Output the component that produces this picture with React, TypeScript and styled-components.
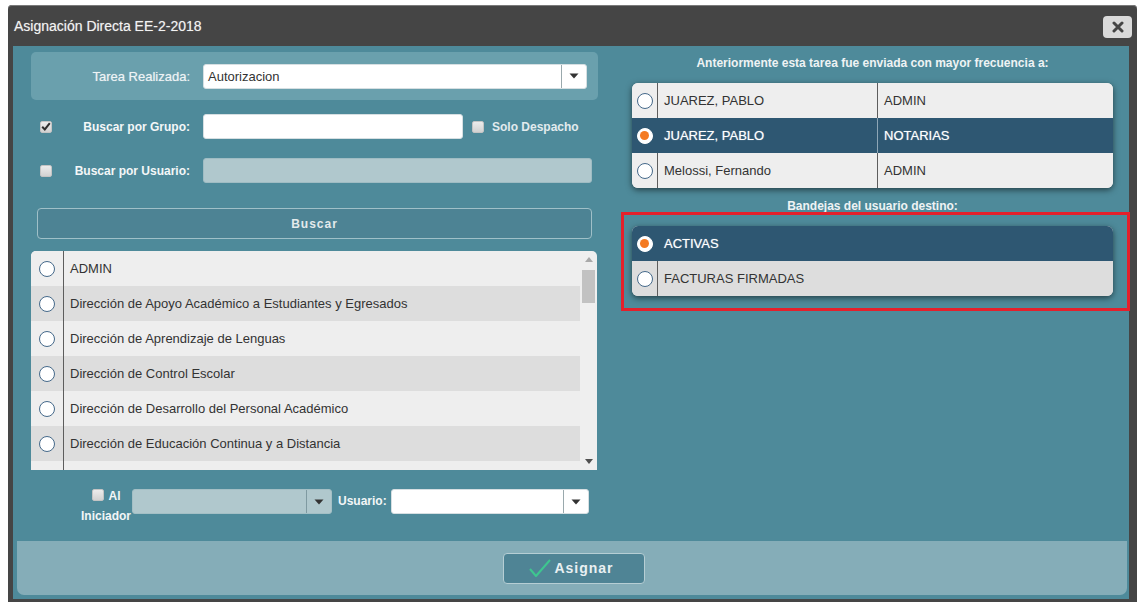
import React from "react";
import styled, { createGlobalStyle } from "styled-components";

const GlobalStyle = createGlobalStyle`
  html, body { margin: 0; padding: 0; background: #fff; }
  body { font-family: "Liberation Sans", Arial, sans-serif; font-size: 12px; color: #333; }
  * { box-sizing: border-box; }
`;

const Page = styled.div`
  padding: 5px 3px 0 8px;
`;

const Dialog = styled.div`
  width: 1129px;
  height: 597px;
  background: #454545;
  border-radius: 4px 4px 0 0;
  box-shadow: inset 0 1px 0 #7a7a7a;
  display: flex;
  flex-direction: column;
`;

const TitleBar = styled.div`
  height: 41px;
  flex: none;
  display: flex;
  align-items: center;
  justify-content: space-between;
  padding: 0 5px 0 6px;
`;

const Title = styled.div`
  color: #f2f2f2;
  font-size: 14px;
  text-shadow: 0 0 1px rgba(255, 255, 255, 0.45);
`;

const CloseButton = styled.button`
  width: 29px;
  height: 22px;
  margin-top: 2px;
  border: none;
  border-radius: 4px;
  background: #dadada;
  display: flex;
  align-items: center;
  justify-content: center;
  padding: 0;
`;

const Body = styled.div`
  flex: 1;
  margin: 0 8px 3px 5px;
  background: #4e8a9a;
  display: flex;
  flex-direction: column;
`;

const Main = styled.div`
  flex: 1;
  display: grid;
  grid-template-columns: 566px 481px;
  column-gap: 35px;
  padding: 6px 16px 0 18px;
`;

const Column = styled.div`
  display: flex;
  flex-direction: column;
`;

/* ---------- form rows ---------- */

const TopPanel = styled.div`
  height: 48px;
  margin-right: -1px;
  background: #6aa0ad;
  border-radius: 5px;
  display: grid;
  grid-template-columns: 172px 1fr;
  align-items: center;
  padding-right: 11px;
`;

const FieldRow = styled.div<{ $top: number }>`
  margin-top: ${(p) => p.$top}px;
  display: grid;
  grid-template-columns: 172px 1fr;
  align-items: center;
  padding-right: 5px;
  height: 25px;
`;

const LabelCell = styled.div`
  display: flex;
  align-items: center;
  padding: 0 13px 0 9px;
`;

const FieldLabel = styled.span<{ $plain?: boolean }>`
  margin-left: auto;
  text-align: right;
  white-space: nowrap;
  color: ${(p) => (p.$plain ? "#eef3f5" : "#f4f7f8")};
  font-size: ${(p) => (p.$plain ? "13px" : "12px")};
  font-weight: bold;
  font-weight: ${(p) => (p.$plain ? "normal" : "bold")};
  text-shadow: ${(p) => (p.$plain ? "0 0 1px rgba(255,255,255,0.5)" : "none")};
`;

const InlineGroup = styled.div`
  display: flex;
  align-items: center;
`;

const TextInput = styled.div<{ $w?: number; $disabled?: boolean }>`
  height: 25px;
  width: ${(p) => (p.$w ? `${p.$w}px` : "100%")};
  border-radius: 3px;
  background: ${(p) => (p.$disabled ? "#b0c8cd" : "#fff")};
  border: 1px solid ${(p) => (p.$disabled ? "#9fbcc3" : "#d6dfe2")};
`;

const CheckLabel = styled.span`
  margin-left: 8px;
  font-weight: bold;
  font-size: 12px;
  color: #e2ebee;
`;

const Box = styled.span<{ $gap?: number; $after?: number }>`
  display: inline-flex;
  align-items: center;
  justify-content: center;
  width: 12px;
  height: 12px;
  flex: none;
  border-radius: 2px;
  border: 1px solid #c4c4c4;
  background: linear-gradient(#ececec, #d2d2d2);
  margin-left: ${(p) => p.$gap ?? 0}px;
  margin-right: ${(p) => p.$after ?? 0}px;
  vertical-align: -1px;
`;

/* ---------- select ---------- */

const SelectBox = styled.div<{ $w?: number; $disabled?: boolean }>`
  display: flex;
  height: 25px;
  width: ${(p) => (p.$w ? `${p.$w}px` : "100%")};
  border-radius: 3px;
  overflow: hidden;
  background: ${(p) => (p.$disabled ? "#b0c8cd" : "#fff")};
  border: 1px solid ${(p) => (p.$disabled ? "#a3bfc5" : "#d6dfe2")};
`;

const SelectValue = styled.div`
  flex: 1;
  display: flex;
  align-items: center;
  padding-left: 4px;
  font-size: 13px;
  color: #333;
`;

const SelectArrow = styled.div<{ $disabled?: boolean }>`
  width: 25px;
  flex: none;
  display: flex;
  align-items: center;
  justify-content: center;
  border-left: 1px solid ${(p) => (p.$disabled ? "#7f9aa1" : "#9aa9ad")};
`;

/* ---------- search button ---------- */

const SearchButton = styled.button`
  margin: 25px 5px 0 6px;
  height: 31px;
  border-radius: 4px;
  border: 1px solid #9fc0c8;
  background: #4d8394;
  color: #e3eaec;
  font-family: "Liberation Sans", Arial, sans-serif;
  font-weight: bold;
  font-size: 12px;
  letter-spacing: 1px;
`;

/* ---------- group list ---------- */

const ListBox = styled.div`
  margin-top: 12px;
  height: 219px;
  display: flex;
  border-radius: 5px 5px 0 0;
  overflow: hidden;
`;

/* the radio column divider keeps running below the last row */
const ListRows = styled.div`
  flex: 1;
  overflow: hidden;
  background: linear-gradient(
      to right,
      transparent 32px,
      #5d5d5d 32px,
      #5d5d5d 33px,
      transparent 33px
    ),
    #eeeeee;
`;

const ListRow = styled.div<{ $alt: boolean }>`
  height: 35px;
  display: grid;
  grid-template-columns: 33px 1fr;
  background: ${(p) => (p.$alt ? "#dddddd" : "#eeeeee")};
`;

const RadioCell = styled.div<{ $line?: string }>`
  display: flex;
  align-items: center;
  justify-content: center;
  border-right: 1px solid ${(p) => p.$line ?? "#5d5d5d"};
`;

const TextCell = styled.div<{ $light?: boolean; $line?: string }>`
  display: flex;
  align-items: center;
  padding-left: 6px;
  font-size: 13px;
  white-space: nowrap;
  color: ${(p) => (p.$light ? "#ffffff" : "#333")};
  text-shadow: ${(p) => (p.$light ? "0 0 1px rgba(255,255,255,0.6)" : "none")};
  border-right: ${(p) => (p.$line ? `1px solid ${p.$line}` : "none")};
`;

const Radio = styled.span<{ $on?: boolean }>`
  width: 16px;
  height: 16px;
  border-radius: 50%;
  background: #fff;
  border: 1.5px solid ${(p) => (p.$on ? "#ffffff" : "#45698a")};
  display: flex;
  align-items: center;
  justify-content: center;
  &::after {
    content: "";
    display: ${(p) => (p.$on ? "block" : "none")};
    width: 9px;
    height: 9px;
    border-radius: 50%;
    background: #f47a22;
  }
`;

const ScrollTrack = styled.div`
  width: 17px;
  flex: none;
  display: flex;
  flex-direction: column;
  background: #efefef;
`;

const ScrollArrow = styled.div`
  height: 17px;
  display: flex;
  align-items: center;
  justify-content: center;
`;

const ScrollThumb = styled.div`
  margin: 2px 2px 0 2px;
  height: 33px;
  background: #c2c2c2;
`;

const ScrollSpace = styled.div`
  flex: 1;
`;

/* ---------- bottom row ---------- */

const BottomRow = styled.div`
  margin-top: 19px;
  display: flex;
  align-items: flex-start;
  padding-left: 49px;
`;

const InitiatorCell = styled.div`
  width: 52px;
  margin-top: -3px;
  text-align: center;
  line-height: 20px;
  font-weight: bold;
  font-size: 12px;
  color: #f2f6f7;
`;

const InlineLabel = styled.span`
  margin: 0 4px 0 6px;
  line-height: 25px;
  font-weight: bold;
  font-size: 12px;
  color: #f2f6f7;
`;

/* ---------- right column ---------- */

const Heading = styled.div<{ $top: number }>`
  margin-top: ${(p) => p.$top}px;
  line-height: 16px;
  text-align: center;
  font-weight: bold;
  font-size: 12px;
  color: #eef3f4;
`;

const Table = styled.div<{ $top: number }>`
  margin-top: ${(p) => p.$top}px;
  border-radius: 6px;
  overflow: hidden;
  background: #eee;
  box-shadow: 0 2px 6px rgba(0, 0, 0, 0.55);
`;

const TableRow = styled.div<{ $cols: string; $selected?: boolean; $alt?: boolean }>`
  height: 35px;
  display: grid;
  grid-template-columns: ${(p) => p.$cols};
  background: ${(p) => (p.$selected ? "#2e5772" : p.$alt ? "#dddddd" : "#eeeeee")};
`;

const Highlight = styled.div`
  position: relative;
  margin-top: 12px;
`;

const HighlightFrame = styled.span`
  position: absolute;
  top: -14px;
  left: -11px;
  right: -17px;
  bottom: -15px;
  border: 3px solid #e4202b;
  pointer-events: none;
`;

/* ---------- footer ---------- */

const Footer = styled.div`
  height: 54px;
  flex: none;
  margin: 0 2px 4px 4px;
  background: #85adb8;
  border-radius: 0 0 7px 7px;
  display: flex;
  align-items: center;
  justify-content: center;
  padding-left: 4px;
`;

const AssignButton = styled.button`
  width: 142px;
  height: 31px;
  border-radius: 4px;
  border: 1px solid #b6ced4;
  background: #4f8495;
  display: flex;
  align-items: center;
  justify-content: center;
  gap: 2px;
  padding: 0 6px 0 0;
  color: #e9f0f2;
  font-family: "Liberation Sans", Arial, sans-serif;
  font-weight: bold;
  font-size: 14px;
  letter-spacing: 1px;
`;

/* ---------- small drawings ---------- */

const Caret = ({ color = "#333" }: { color?: string }) => (
  <svg width="10" height="6" viewBox="0 0 10 6">
    <polygon points="0.5,0.5 9.5,0.5 5,5.5" fill={color} />
  </svg>
);

const Tick = () => (
  <svg width="10" height="9" viewBox="0 0 10 9">
    <path d="M1.2 4.8 L3.8 7.4 L8.8 1.2" fill="none" stroke="#2e2e2e" strokeWidth="2" />
  </svg>
);

const CloseIcon = () => (
  <svg width="12" height="12" viewBox="0 0 12 12">
    <path d="M2 2 L10 10 M10 2 L2 10" stroke="#454545" strokeWidth="3" strokeLinecap="round" />
  </svg>
);

const CheckIcon = () => (
  <svg width="24" height="20" viewBox="0 0 24 20">
    <path d="M2 11 L8 18 L22 2" fill="none" stroke="#3ec68f" strokeWidth="2" strokeLinejoin="round" />
  </svg>
);

const ScrollTri = ({ up, color }: { up?: boolean; color: string }) => (
  <svg width="8" height="5" viewBox="0 0 8 5">
    <polygon points={up ? "0,5 8,5 4,0" : "0,0 8,0 4,5"} fill={color} />
  </svg>
);

const groups = [
  "ADMIN",
  "Dirección de Apoyo Académico a Estudiantes y Egresados",
  "Dirección de Aprendizaje de Lenguas",
  "Dirección de Control Escolar",
  "Dirección de Desarrollo del Personal Académico",
  "Dirección de Educación Continua y a Distancia",
];

const recent = [
  { name: "JUAREZ, PABLO", group: "ADMIN", selected: false },
  { name: "JUAREZ, PABLO", group: "NOTARIAS", selected: true },
  { name: "Melossi, Fernando", group: "ADMIN", selected: false },
];

const trays = [
  { name: "ACTIVAS", selected: true },
  { name: "FACTURAS FIRMADAS", selected: false },
];

export default function App() {
  return (
    <>
      <GlobalStyle />
      <Page>
        <Dialog>
          <TitleBar>
            <Title>Asignación Directa EE-2-2018</Title>
            <CloseButton aria-label="Cerrar">
              <CloseIcon />
            </CloseButton>
          </TitleBar>
          <Body>
            <Main>
              <Column>
                <TopPanel>
                  <LabelCell>
                    <FieldLabel $plain>Tarea Realizada:</FieldLabel>
                  </LabelCell>
                  <SelectBox>
                    <SelectValue>Autorizacion</SelectValue>
                    <SelectArrow>
                      <Caret />
                    </SelectArrow>
                  </SelectBox>
                </TopPanel>

                <FieldRow $top={14}>
                  <LabelCell>
                    <Box>
                      <Tick />
                    </Box>
                    <FieldLabel>Buscar por Grupo:</FieldLabel>
                  </LabelCell>
                  <InlineGroup>
                    <TextInput $w={260} />
                    <Box $gap={9} />
                    <CheckLabel>Solo Despacho</CheckLabel>
                  </InlineGroup>
                </FieldRow>

                <FieldRow $top={19}>
                  <LabelCell>
                    <Box />
                    <FieldLabel>Buscar por Usuario:</FieldLabel>
                  </LabelCell>
                  <TextInput $disabled />
                </FieldRow>

                <SearchButton>Buscar</SearchButton>

                <ListBox>
                  <ListRows>
                    {groups.map((g, i) => (
                      <ListRow key={g} $alt={i % 2 === 1}>
                        <RadioCell>
                          <Radio />
                        </RadioCell>
                        <TextCell>{g}</TextCell>
                      </ListRow>
                    ))}
                  </ListRows>
                  <ScrollTrack>
                    <ScrollArrow>
                      <ScrollTri up color="#a9a9a9" />
                    </ScrollArrow>
                    <ScrollThumb />
                    <ScrollSpace />
                    <ScrollArrow>
                      <ScrollTri color="#505050" />
                    </ScrollArrow>
                  </ScrollTrack>
                </ListBox>

                <BottomRow>
                  <InitiatorCell>
                    <Box $after={5} />Al
                    <br />
                    Iniciador
                  </InitiatorCell>
                  <SelectBox $w={200} $disabled>
                    <SelectValue />
                    <SelectArrow $disabled>
                      <Caret />
                    </SelectArrow>
                  </SelectBox>
                  <InlineLabel>Usuario:</InlineLabel>
                  <SelectBox $w={198}>
                    <SelectValue />
                    <SelectArrow>
                      <Caret />
                    </SelectArrow>
                  </SelectBox>
                </BottomRow>
              </Column>

              <Column>
                <Heading $top={3}>
                  Anteriormente esta tarea fue enviada con mayor frecuencia a:
                </Heading>
                <Table $top={12}>
                  {recent.map((r, i) => (
                    <TableRow
                      key={i}
                      $cols="26px 220px 1fr"
                      $selected={r.selected}
                      $alt={i % 2 === 1}
                    >
                      <RadioCell $line={r.selected ? "transparent" : undefined}>
                        <Radio $on={r.selected} />
                      </RadioCell>
                      <TextCell
                        $light={r.selected}
                        $line={r.selected ? "#8ea6b6" : "#5d5d5d"}
                      >
                        {r.name}
                      </TextCell>
                      <TextCell $light={r.selected}>{r.group}</TextCell>
                    </TableRow>
                  ))}
                </Table>

                <Heading $top={10}>Bandejas del usuario destino:</Heading>
                <Highlight>
                  <Table $top={0}>
                    {trays.map((t, i) => (
                      <TableRow
                        key={t.name}
                        $cols="26px 1fr"
                        $selected={t.selected}
                        $alt={i % 2 === 1}
                      >
                        <RadioCell $line={t.selected ? "transparent" : undefined}>
                          <Radio $on={t.selected} />
                        </RadioCell>
                        <TextCell $light={t.selected}>{t.name}</TextCell>
                      </TableRow>
                    ))}
                  </Table>
                  <HighlightFrame />
                </Highlight>
              </Column>
            </Main>
            <Footer>
              <AssignButton>
                <CheckIcon />
                Asignar
              </AssignButton>
            </Footer>
          </Body>
        </Dialog>
      </Page>
    </>
  );
}
